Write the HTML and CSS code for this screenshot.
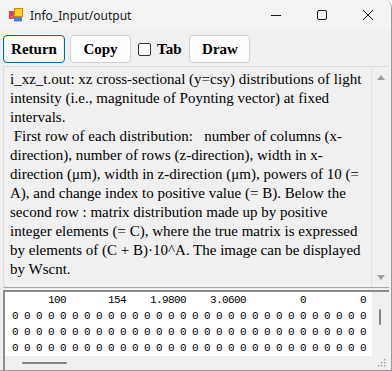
FILE: index.html
```html
<!DOCTYPE html>
<html lang="en">
<head>
    <meta charset="UTF-8">
    <title>Info_Input/output</title>
    <link rel="stylesheet" href="styles.css">
</head>
<body>

<div class="window">
    <div class="titlebar">
        <svg class="app-icon" width="14" height="14" viewBox="0 0 14 14">
            <rect x="0.5" y="3.5" width="4" height="3" fill="#e04040" stroke="#a02020" stroke-width="0.6"/>
            <rect x="0.5" y="7.5" width="4" height="3" fill="#e86060" stroke="#a02020" stroke-width="0.6"/>
            <rect x="5.5" y="0.5" width="8" height="8" fill="#ffd21f" stroke="#d08a00" stroke-width="1"/>
            <rect x="5.5" y="9.5" width="7" height="3.5" fill="#4a86d8" stroke="#2a5aa8" stroke-width="0.6"/>
        </svg>
        <span class="title">Info_Input/output</span>
        <div class="controls">
            <svg class="ctl" width="46" height="30" viewBox="0 0 46 30"><path d="M18 15.5h10" stroke="#1a1a1a" stroke-width="1"/></svg>
            <svg class="ctl" width="46" height="30" viewBox="0 0 46 30"><rect x="18.5" y="10.5" width="9" height="9" rx="1.5" fill="none" stroke="#1a1a1a" stroke-width="1"/></svg>
            <svg class="ctl" width="46" height="30" viewBox="0 0 46 30"><path d="M18 10l10 10M28 10l-10 10" stroke="#1a1a1a" stroke-width="1"/></svg>
        </div>
    </div>

    <div class="toolbar">
        <button class="btn focused">Return</button>
        <button class="btn">Copy</button>
        <label class="check"><span class="box"></span>Tab</label>
        <button class="btn draw">Draw</button>
    </div>

    <div class="info">
        <div class="info-text">i_xz_t.out: xz cross-sectional (y=csy) distributions of light intensity (i.e., magnitude of Poynting vector) at fixed intervals.<br>&nbsp;First row of each distribution:&nbsp;&nbsp; number of columns (x-direction), number of rows (z-direction), width in x-direction (μm), width in z-direction (μm), powers of 10 (= A), and change index to positive value (= B). Below the second row : matrix distribution made up by positive integer elements (= C), where the true matrix is expressed by elements of (C + B)·10^A. The image can be displayed by Wscnt.</div>
        <div class="vscroll">
            <span class="arrow up"></span>
            <span class="arrow down"></span>
        </div>
    </div>

    <div class="data">
        <div class="data-main">
            <pre class="data-text" id="dataText"></pre>
            <div class="hscroll"><span class="hthumb"></span></div>
        </div>
        <div class="data-vscroll">
            <span class="vthumb"></span>
            <svg class="grip" width="8" height="8" viewBox="0 0 8 8">
                <rect x="6" y="0" width="1.4" height="1.4" fill="#9a9a9a"/>
                <rect x="3" y="3" width="1.4" height="1.4" fill="#9a9a9a"/>
                <rect x="6" y="3" width="1.4" height="1.4" fill="#9a9a9a"/>
                <rect x="0" y="6" width="1.4" height="1.4" fill="#9a9a9a"/>
                <rect x="3" y="6" width="1.4" height="1.4" fill="#9a9a9a"/>
                <rect x="6" y="6" width="1.4" height="1.4" fill="#9a9a9a"/>
            </svg>
        </div>
    </div>
</div>

<script>
    const header = [100, 154, "1.9800", "3.0600", 0, 0];
    let lines = [header.map(v => String(v).padStart(10, " ")).join("")];
    for (let r = 0; r < 3; r++) {
        lines.push(" 0".repeat(30));
    }
    document.getElementById("dataText").textContent = lines.join("\n");
</script>

</body>
</html>
```

FILE: styles.css
```css
body {
    margin: 0;
    padding: 0;
    background: #ffffff;
}
.window {
    width: 391px;
    height: 370px;
    background: #f0f0f0;
    border-right: 1px solid #9a9a9a;
    border-bottom: 1px solid #9a9a9a;
    border-top-right-radius: 8px;
    overflow: hidden;
    display: flex;
    flex-direction: column;
}
.titlebar {
    height: 30px;
    flex: none;
    display: flex;
    align-items: center;
    background: #f3f3f3;
}
.app-icon {
    margin-left: 9px;
    margin-right: 7px;
}
.title {
    font-family: "Noto Sans", sans-serif;
    font-size: 12px;
    color: #1a1a1a;
}
.controls {
    margin-left: auto;
    display: flex;
}
.ctl {
    display: block;
}
.toolbar {
    height: 35px;
    flex: none;
    display: flex;
    align-items: flex-start;
    padding: 5px 0 0 3px;
    box-sizing: border-box;
}
.btn {
    font-family: "Liberation Serif", serif;
    font-weight: bold;
    font-size: 15px;
    height: 28px;
    width: 61px;
    padding: 0;
    margin-right: 5px;
    background: #fdfdfd;
    border: 1px solid #d0d0d0;
    border-radius: 4px;
    color: #000;
}
.btn.focused {
    width: 62px;
    border: 1px solid #0067c0;
    box-shadow: inset 0 0 0 1px #f0f0f0;
}
.check {
    display: flex;
    align-items: center;
    height: 28px;
    margin: 0 8px 0 2px;
    font-family: "Liberation Serif", serif;
    font-weight: bold;
    font-size: 15px;
}
.box {
    width: 11px;
    height: 11px;
    border: 1px solid #333;
    border-radius: 2px;
    background: #fdfdfd;
    margin-right: 6px;
}
.info {
    height: 220px;
    flex: none;
    margin: 1px 2px 0 3px;
    display: flex;
    border-top: 1px solid #dcdcdc;
    border-left: 1px solid #dcdcdc;
    border-bottom: 1px solid #a8a8a8;
}
.info-text {
    flex: 1;
    overflow: hidden;
    padding: 3px 0 0 6px;
    font-family: "Liberation Serif", serif;
    font-size: 15px;
    line-height: 19px;
    color: #000;
}
.vscroll {
    width: 17px;
    flex: none;
    border-left: 1px solid #e0e0e0;
    display: flex;
    flex-direction: column;
    justify-content: space-between;
    align-items: center;
    padding: 8px 0 7px;
}
.arrow {
    width: 0;
    height: 0;
    border-left: 4px solid transparent;
    border-right: 4px solid transparent;
}
.arrow.up {
    border-bottom: 5px solid #a0a0a0;
}
.arrow.down {
    border-top: 5px solid #a0a0a0;
}
.data {
    flex: 1;
    margin: 2px 2px 0 3px;
    display: flex;
    border-top: 2px solid #8c8c8c;
    border-left: 2px solid #8c8c8c;
}
.data-main {
    flex: 1;
    min-width: 0;
    display: flex;
    flex-direction: column;
}
.data-text {
    margin: 0;
    height: 64px;
    padding: 0 0 0 1px;
    background: #fff;
    overflow: hidden;
    font-family: "Liberation Mono", monospace;
    font-size: 11px;
    letter-spacing: -0.6px;
    line-height: 16px;
    color: #000;
}
.hscroll {
    flex: 1;
    position: relative;
}
.hthumb {
    position: absolute;
    left: 17px;
    top: 6px;
    width: 45px;
    height: 2px;
    border-radius: 1px;
    background: #858585;
}
.data-vscroll {
    width: 17px;
    flex: none;
    position: relative;
}
.vthumb {
    position: absolute;
    left: 7px;
    top: 17px;
    width: 2px;
    height: 16px;
    border-radius: 1px;
    background: #858585;
}
.grip {
    position: absolute;
    right: 3px;
    bottom: 3px;
}
```
